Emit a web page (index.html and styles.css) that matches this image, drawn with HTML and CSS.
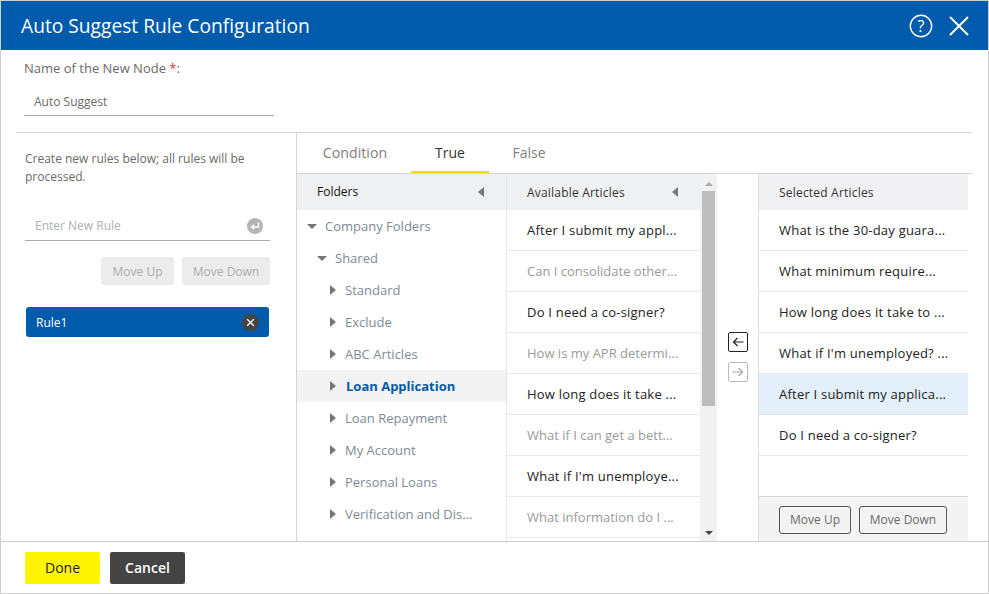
FILE: index.html
```html
<!DOCTYPE html>
<html lang="en">
<head>
<meta charset="utf-8">
<title>Auto Suggest Rule Configuration</title>
<link rel="stylesheet" href="styles.css">
</head>
<body>
<div class="dialog">
  <header class="titlebar">
    <h1 class="title">Auto Suggest Rule Configuration</h1>
    <svg class="help" width="24" height="24" viewBox="0 0 24 24"><circle cx="12" cy="12" r="10.7" fill="none" stroke="#fff" stroke-width="1.4"/><text x="12" y="17.6" text-anchor="middle" class="help-q">?</text></svg>
    <svg class="close" width="20" height="20" viewBox="0 0 20 20"><path d="M1 1L19 19M19 1L1 19" stroke="#fff" stroke-width="2" fill="none"/></svg>
  </header>
  <section class="name-block">
    <div class="name-label">Name of the New Node <span class="req">*</span>:</div>
    <div class="name-input">Auto Suggest</div>
  </section>
  <div class="body">
    <aside class="rules">
      <p class="rules-help">Create new rules below; all rules will be processed.</p>
      <div class="rule-input">
        <span>Enter New Rule</span>
        <svg width="16" height="16" viewBox="0 0 16 16"><circle cx="8" cy="8" r="8" fill="#b4b4b4"/><path d="M11.5 4.5V9H5M7 6.8L4.7 9L7 11.2" fill="none" stroke="#fff" stroke-width="1.6"/></svg>
      </div>
      <div class="rule-actions">
        <span class="btn-disabled up">Move Up</span>
        <span class="btn-disabled down">Move Down</span>
      </div>
      <div class="rule-item">
        <span>Rule1</span>
        <svg width="17" height="17" viewBox="0 0 17 17"><circle cx="8.5" cy="8.5" r="8.5" fill="#444"/><path d="M5.2 5.2L11.8 11.8M11.8 5.2L5.2 11.8" stroke="#fff" stroke-width="1.3"/></svg>
      </div>
    </aside>
    <main class="config">
      <nav class="tabs">
        <span class="tab t1">Condition</span>
        <span class="tab t2 active">True</span>
        <span class="tab t3">False</span>
      </nav>
      <div class="panes">
        <section class="folders">
          <div class="col-head folders-head"><b>Folders</b><i class="tri-left"></i></div>
          <ul class="tree">
            <li class="l0"><i class="tri-down"></i>Company Folders</li>
            <li class="l1"><i class="tri-down"></i>Shared</li>
            <li class="l2"><i class="tri-right"></i>Standard</li>
            <li class="l2"><i class="tri-right"></i>Exclude</li>
            <li class="l2"><i class="tri-right"></i>ABC Articles</li>
            <li class="l2 current"><i class="tri-right"></i>Loan Application</li>
            <li class="l2"><i class="tri-right"></i>Loan Repayment</li>
            <li class="l2"><i class="tri-right"></i>My Account</li>
            <li class="l2"><i class="tri-right"></i>Personal Loans</li>
            <li class="l2"><i class="tri-right"></i>Verification and Dis...</li>
          </ul>
        </section>
        <section class="available">
          <div class="col-head avail-head"><span>Available Articles</span><i class="tri-left"></i></div>
          <ul class="articles">
            <li>After I submit my appl...</li>
            <li class="muted">Can I consolidate other...</li>
            <li>Do I need a co-signer?</li>
            <li class="muted">How is my APR determi...</li>
            <li>How long does it take ...</li>
            <li class="muted">What if I can get a bett...</li>
            <li>What if I'm unemploye...</li>
            <li class="muted">What information do I ...</li>
          </ul>
        </section>
        <div class="scrollbar">
          <i class="sb-up"></i>
          <div class="sb-track"><div class="sb-thumb"></div></div>
          <i class="sb-down"></i>
        </div>
        <div class="transfer">
          <span class="arrow-btn on"><svg width="12" height="10" viewBox="0 0 12 10"><path d="M11.5 5H1.5M5.5 1L1.5 5L5.5 9" fill="none" stroke="#222" stroke-width="1.2"/></svg></span>
          <span class="arrow-btn off"><svg width="12" height="10" viewBox="0 0 12 10"><path d="M.5 5H10.5M6.5 1L10.5 5L6.5 9" fill="none" stroke="#aaa" stroke-width="1.2"/></svg></span>
        </div>
        <section class="selected">
          <div class="col-head sel-head"><span>Selected Articles</span></div>
          <ul class="articles sel-list">
            <li>What is the 30-day guara...</li>
            <li>What minimum require...</li>
            <li>How long does it take to ...</li>
            <li>What if I'm unemployed? ...</li>
            <li class="picked">After I submit my applica...</li>
            <li>Do I need a co-signer?</li>
          </ul>
          <div class="sel-foot">
            <span class="btn-outline up2">Move Up</span>
            <span class="btn-outline down2">Move Down</span>
          </div>
        </section>
      </div>
    </main>
  </div>
  <footer class="footer">
    <span class="btn-done">Done</span>
    <span class="btn-cancel">Cancel</span>
  </footer>
</div>
</body>
</html>
```
FILE: styles.css
```css
* { box-sizing: border-box; }
html, body { margin: 0; padding: 0; }
body { width: 989px; height: 594px; overflow: hidden; background: #fff; font-family: "Open Sans", sans-serif; font-size: 13px; color: #6f6f6f; }
ul { list-style: none; margin: 0; padding: 0; }
i { display: block; flex: none; }
.dialog { width: 989px; height: 594px; border: 1px solid #cfcfcf; display: flex; flex-direction: column; }
.titlebar { height: 49px; flex: none; background: #005bac; display: flex; align-items: center; padding: 0 19px 0 20px; color: #fff; }
.title { margin: 0; flex: 1; font-size: 19.2px; font-weight: 400; line-height: 49px; color: #fff; }
.help { margin-right: 16px; }
.help-q { font-family: "Open Sans", sans-serif; font-size: 16px; fill: #fff; }
.name-block { height: 82px; flex: none; padding: 9px 0 0 23px; }
.name-label { line-height: 18px; font-size: 13px; color: #6a6a6a; }
.req { color: #e0342c; }
.name-input { width: 250px; height: 30px; margin-top: 9px; padding-left: 10px; border-bottom: 1px solid #aaa; font-size: 12px; line-height: 32px; color: #6a6a6a; }
.body { flex: 1; min-height: 0; margin: 0 16px 0 15px; border-top: 1px solid #d5d5d5; display: flex; }
.rules { width: 281px; flex: none; border-right: 1px solid #d5d5d5; padding: 17px 26px 0 9px; }
.rules-help { margin: 0; font-size: 12px; line-height: 18px; color: #6a6a6a; }
.rule-input { height: 30px; margin-top: 25px; padding: 0 7px 0 10px; border-bottom: 1px solid #aaa; display: flex; align-items: center; justify-content: space-between; font-size: 12px; color: #b0b0b0; }
.rule-actions { display: flex; justify-content: flex-end; gap: 8px; margin-top: 16px; }
.btn-disabled { height: 28px; border-radius: 3px; background: #ececec; color: #adadad; font-size: 12px; line-height: 29px; text-align: center; }
.up { width: 73px; }
.down { width: 88px; }
.rule-item { height: 30px; margin: 22px 1px 0; padding: 0 10px; border-radius: 3px; background: #005bac; color: #fff; display: flex; align-items: center; justify-content: space-between; font-size: 12px; font-weight: 500; }
.config { flex: 1; min-width: 0; display: flex; flex-direction: column; overflow: hidden; }
.tabs { height: 41px; flex: none; display: flex; border-bottom: 1px solid #d5d5d5; }
.tab { font-size: 14px; line-height: 39px; height: 40px; text-align: center; color: #808080; }
.t1 { width: 114px; padding-left: 2px; font-size: 14.2px; }
.t2 { width: 78px; color: #333; font-weight: 500; border-bottom: 2px solid #ffd800; }
.t3 { width: 80px; }
.panes { flex: 1; min-height: 0; display: flex; overflow: hidden; }
.folders { width: 210px; flex: none; border-right: 1px solid #e6e6e6; }
.available { width: 193px; flex: none; }
.col-head { display: flex; align-items: center; justify-content: space-between; background: #eff0f2; font-size: 12px; font-weight: 500; letter-spacing: .2px; color: #333; }
.folders-head { height: 36px; padding: 0 22px 0 20px; }
.folders-head b { font-size: 12px; font-weight: 500; letter-spacing: 0; color: #111; margin-top: -1px; }
.avail-head { height: 36px; padding: 0 22px 0 20px; }
.sel-head { height: 36px; padding: 0 20px; background: #f1f1f3; }
.tri-left { width: 0; height: 0; border-style: solid; border-width: 5px 6px 5px 0; border-color: transparent #777 transparent transparent; }
.tri-down { width: 0; height: 0; border-style: solid; border-width: 5px 5px 0 5px; border-color: #777 transparent transparent transparent; }
.tri-right { width: 0; height: 0; border-style: solid; border-width: 5px 0 5px 6px; border-color: transparent transparent transparent #777; }
.tree li { height: 32px; display: flex; align-items: center; font-size: 13px; color: #808a96; }
.l0 { padding-left: 10px; }
.l0 i { margin-right: 8px; }
.l1 { padding-left: 20px; }
.l1 i { margin-right: 8px; }
.l2 { padding-left: 33px; }
.l2 i { margin-right: 9px; }
.tree li.current { background: #f3f3f3; color: #005bac; font-weight: 700; }
.tree li.current i { margin-right: 10px; }
.articles li { height: 41px; padding: 0 0 1px 20px; border-bottom: 1px solid #e8e8e8; font-size: 13px; font-weight: 500; letter-spacing: .22px; line-height: 40px; color: #222; white-space: nowrap; overflow: hidden; }
.articles li.muted { color: #9a9a9a; font-weight: 400; letter-spacing: 0; }
.scrollbar { width: 17px; flex: none; background: #f1f1f1; display: flex; flex-direction: column; align-items: center; }
.sb-up { height: 0; width: 0; margin: 8px 0 5px; border-style: solid; border-width: 0 4px 4px 4px; border-color: transparent transparent #a8a8a8 transparent; }
.sb-track { flex: 1; width: 100%; min-height: 0; padding: 0 2px; }
.sb-thumb { height: 215px; width: 13px; background: #bdbdbd; }
.sb-down { height: 0; width: 0; margin: 3px 0 6px; border-style: solid; border-width: 4px 4px 0 4px; border-color: #444 transparent transparent transparent; }
.transfer { width: 42px; flex: none; border-right: 1px solid #dcdcdc; display: flex; flex-direction: column; align-items: center; padding-top: 158px; gap: 10px; }
.arrow-btn { width: 20px; height: 20px; border-radius: 2px; display: flex; align-items: center; justify-content: center; background: #fff; }
.on { border: 1px solid #222; }
.off { border: 1px solid #bbb; }
.selected { width: 209px; flex: none; display: flex; flex-direction: column; }
.sel-list { flex: 1; min-height: 0; }
.articles li.picked { background: #e3effb; }
.sel-foot { height: 45px; flex: none; background: #f3f3f3; border-top: 1px solid #d8d8d8; display: flex; gap: 8px; padding: 9px 0 0 20px; }
.btn-outline { height: 28px; border: 1px solid #555; border-radius: 3px; font-size: 12px; line-height: 26px; text-align: center; color: #6a6a6a; }
.up2 { width: 72px; }
.down2 { width: 88px; }
.footer { height: 52px; flex: none; border-top: 1px solid #cfcfcf; display: flex; gap: 10px; padding: 10px 0 0 24px; }
.btn-done, .btn-cancel { width: 75px; height: 32px; border-radius: 2px; font-size: 14px; line-height: 32px; text-align: center; }
.btn-done { background: #fff500; color: #222; font-weight: 500; }
.btn-cancel { background: #444; color: #fff; font-weight: 600; }
```
